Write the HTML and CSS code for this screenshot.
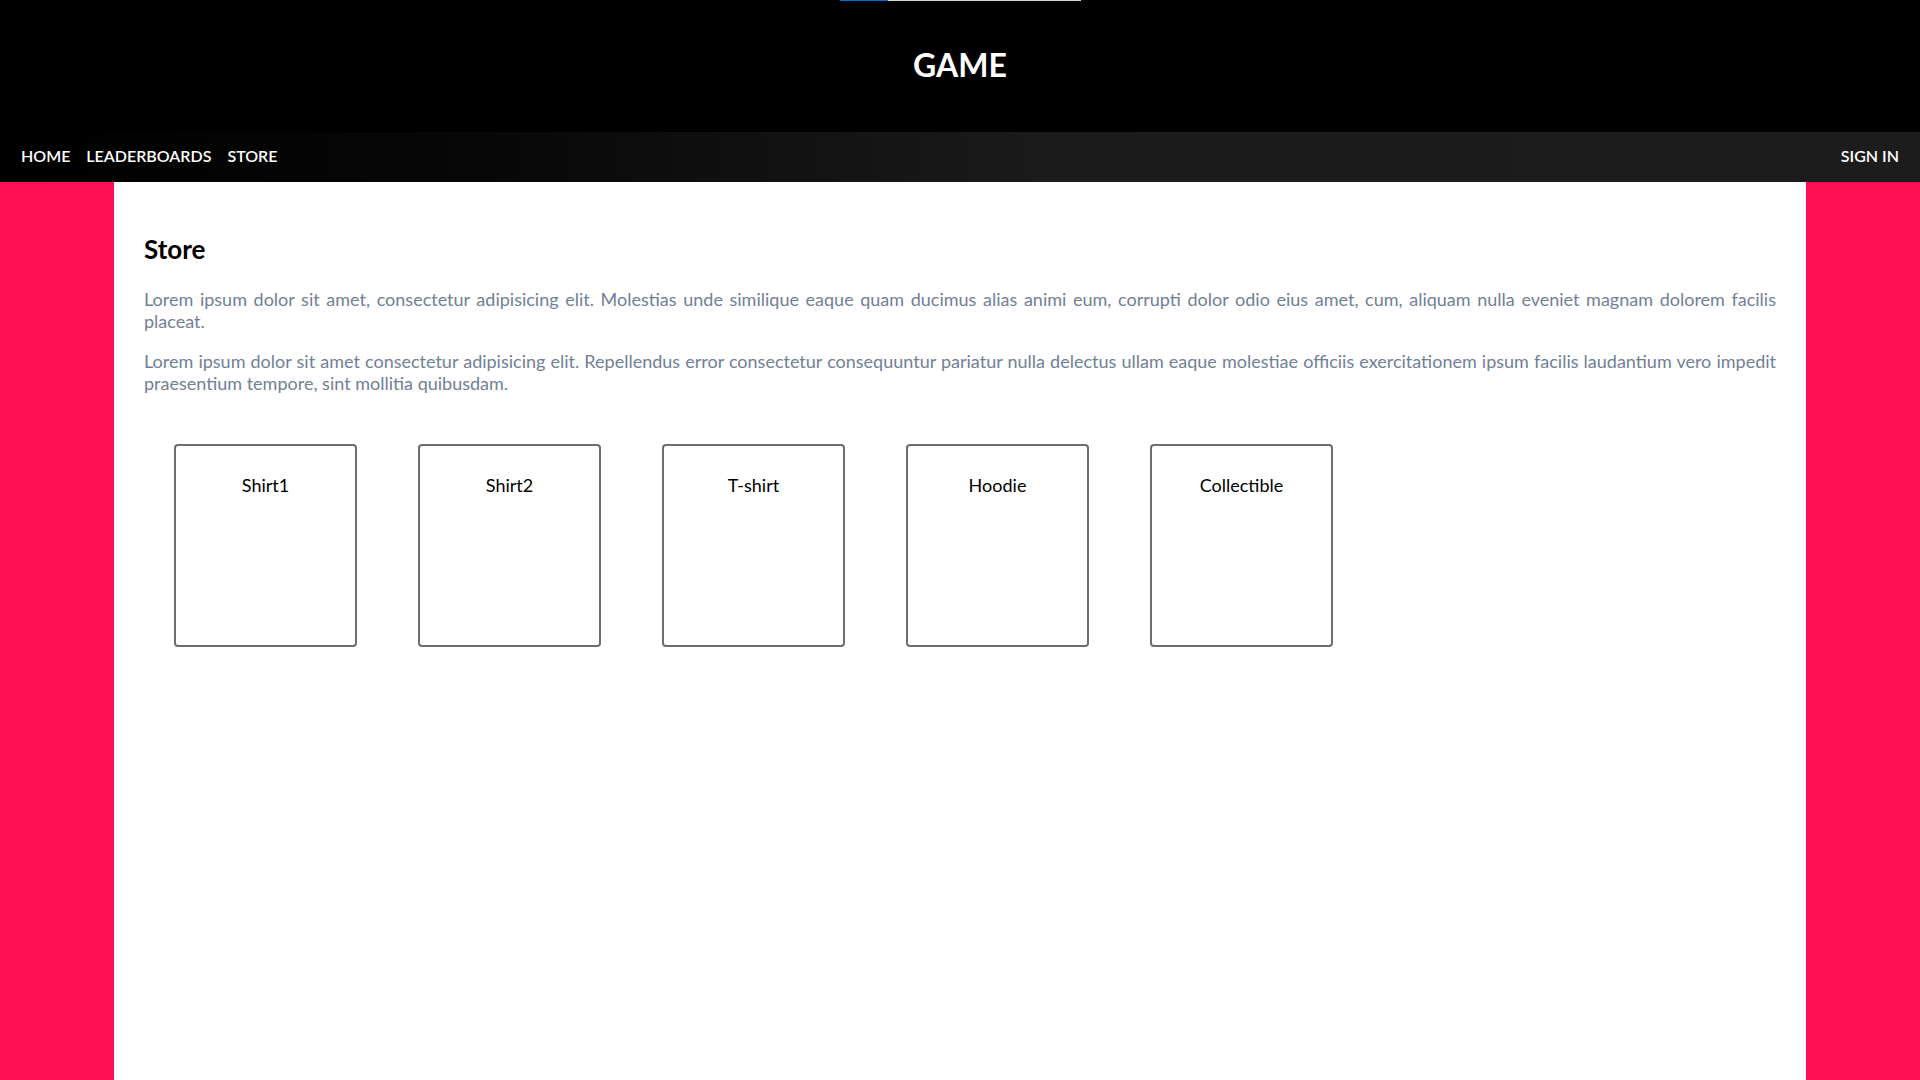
FILE: index.html
```html
<!DOCTYPE html>
<html lang="en">
<head>
<meta charset="utf-8">
<title>Game - Store</title>
<link rel="stylesheet" href="styles.css">
</head>
<body>
<div class="loader"><div class="loader-fill"></div></div>
<header class="site-header">
  <h1 class="site-title">GAME</h1>
</header>
<nav class="nav">
  <div class="nav-left">
    <a class="nav-link" href="#">HOME</a>
    <a class="nav-link" href="#">LEADERBOARDS</a>
    <a class="nav-link" href="#">STORE</a>
  </div>
  <a class="nav-link" href="#">SIGN IN</a>
</nav>
<div class="page">
  <main class="content">
    <h2 class="heading">Store</h2>
    <p class="text">Lorem ipsum dolor sit amet, consectetur adipisicing elit. Molestias unde similique eaque quam ducimus alias animi eum, corrupti dolor odio eius amet, cum, aliquam nulla eveniet magnam dolorem facilis placeat.</p>
    <p class="text">Lorem ipsum dolor sit amet consectetur adipisicing elit. Repellendus error consectetur consequuntur pariatur nulla delectus ullam eaque molestiae officiis exercitationem ipsum facilis laudantium vero impedit praesentium tempore, sint mollitia quibusdam.</p>
    <div class="items">
      <div class="item">Shirt1</div>
      <div class="item">Shirt2</div>
      <div class="item">T-shirt</div>
      <div class="item">Hoodie</div>
      <div class="item">Collectible</div>
    </div>
  </main>
</div>
</body>
</html>
```
FILE: styles.css
```css
* { box-sizing: border-box; }
html, body { margin: 0; padding: 0; }
body {
  font-family: Lato, "Open Sans", "Liberation Sans", sans-serif;
  background: #fe0e55;
  min-height: 1080px;
}
.loader {
  position: absolute;
  top: 0;
  left: 840px;
  width: 241px;
  height: 1px;
  background: #d6d6d6;
}
.loader-fill {
  width: 48px;
  height: 100%;
  background: #0a6ed1;
}
.site-header {
  background: #000;
  height: 132px;
  padding-top: 45px;
  text-align: center;
}
.site-title {
  margin: 0;
  color: #fff;
  font-size: 32px;
  font-weight: 700;
  line-height: normal;
}
.nav {
  height: 50px;
  display: flex;
  align-items: flex-start;
  justify-content: space-between;
  padding: 14px 21px 0;
  background: linear-gradient(90deg, #000 0%, #070707 25%, #1b1b1b 55%, #1c1c1c 100%);
}
.nav-left {
  display: flex;
  gap: 16px;
}
.nav-link {
  color: #fff;
  text-decoration: none;
  font-size: 16px;
  font-weight: 600;
  line-height: normal;
}
.page {
  display: flex;
  justify-content: center;
}
.content {
  width: 1692px;
  min-height: 898px;
  background: #fff;
  padding: 51px 30px 40px;
}
.heading {
  margin: 0 0 23px;
  font-size: 26px;
  font-weight: 700;
  line-height: normal;
  color: #000;
}
.text {
  margin: 0 0 18px;
  font-size: 18px;
  line-height: 22px;
  color: #718096;
  text-align: justify;
}
.items {
  display: flex;
  gap: 61px;
  padding: 32px 30px 0;
}
.item {
  width: 183px;
  height: 203px;
  border: 2px solid #6e6e6e;
  border-radius: 4px;
  padding-top: 28px;
  text-align: center;
  font-size: 18px;
  line-height: normal;
  color: #000;
}
```
